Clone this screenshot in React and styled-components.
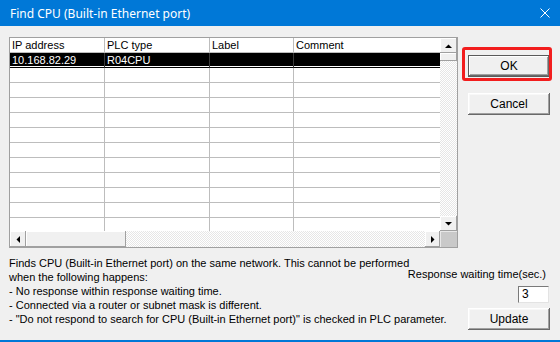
import React from 'react';
import styled, { createGlobalStyle } from 'styled-components';

const Global = createGlobalStyle`
  html, body { margin: 0; padding: 0; background: #f0f0f0; }
  body { font-family: "Liberation Sans", Arial, sans-serif; }
  * { box-sizing: border-box; }
`;

const Window = styled.div`
  position: relative;
  width: 560px;
  height: 342px;
  background: #f0f0f0;
  border-bottom: 2px solid #0078d7;
  display: flex;
  flex-direction: column;
  overflow: hidden;
  font-family: "Liberation Sans", Arial, sans-serif;
  font-size: 11px;
  color: #000;
`;

const TitleBar = styled.div`
  height: 26px;
  flex-shrink: 0;
  background: #0078d7;
  color: #fff;
  display: flex;
  align-items: center;
  justify-content: space-between;
  padding: 0 10px;
  font-family: "Noto Sans", sans-serif;
  font-size: 12px;
`;

const Body = styled.div`
  flex: 1;
  display: flex;
  flex-direction: column;
  padding: 11px 10px 0 9px;
`;

const TopRow = styled.div`
  display: flex;
`;

const Frame = styled.div`
  width: 450px;
  height: 211px;
  border: 1px solid #a0a0a0;
  background: #fff;
  display: grid;
  grid-template-columns: 1fr 17px;
  grid-template-rows: 1fr 16px;
`;

const Cells = styled.div`
  overflow: hidden;
  display: flex;
  flex-direction: column;
`;

const Row = styled.div`
  display: grid;
  grid-template-columns: 95px 105px 84px 1fr;
  height: 15px;
  flex-shrink: 0;
`;

const Cell = styled.div`
  height: 15px;
  line-height: 13px;
  padding: 1px 0 0 2px;
  white-space: nowrap;
  overflow: hidden;
  border-right: 1px solid ${p => (p.$sel ? '#3a3a3a' : '#bdbdbd')};
  border-bottom: 1px solid ${p => (p.$sel ? '#000' : '#bdbdbd')};
  color: ${p => (p.$sel ? '#fff' : '#000')};
  background: ${p => (p.$sel ? 'linear-gradient(to bottom, #000 0 13px, #fff 13px 14px)' : '#fff')};
  &:last-child { border-right: none; }
`;

const track = `
  background-color: #fff;
  background-image: repeating-conic-gradient(#e6e6e6 0 25%, #fff 0 50%);
  background-size: 2px 2px;
`;

const VScroll = styled.div`
  display: flex;
  flex-direction: column;
  ${track}
`;

const HScroll = styled.div`
  display: flex;
  ${track}
`;

const ScrollBtn = styled.div`
  flex-shrink: 0;
  width: ${p => p.$w}px;
  height: ${p => p.$h}px;
  background: #f0f0f0;
  box-shadow: inset -1px -1px #a0a0a0, inset 1px 1px #fff;
  display: flex;
  align-items: center;
  justify-content: center;
`;

const Thumb = styled.div`
  flex-shrink: 0;
  width: ${p => p.$w}px;
  height: ${p => p.$h}px;
  background: #f0f0f0;
  box-shadow: inset -1px -1px #a0a0a0, inset 1px 1px #fff;
`;

const Spacer = styled.div`
  flex: 1;
`;

const Corner = styled.div`
  background: #c9c9c9;
  box-shadow: inset 1px 1px #e8e8e8;
`;

const Arrow = ({ dir }) => {
  const pts = {
    up: '0,4 7,4 3.5,0.5',
    down: '0,0 7,0 3.5,3.5',
    left: '4,0 4,7 0.5,3.5',
    right: '0,0 0,7 3.5,3.5',
  }[dir];
  const v = dir === 'up' || dir === 'down';
  return (
    <svg width={v ? 7 : 4} height={v ? 4 : 7} viewBox={v ? '0 0 7 4' : '0 0 4 7'}>
      <polygon points={pts} fill="#000" />
    </svg>
  );
};

const ButtonCol = styled.div`
  margin-left: 10px;
  width: 82px;
  display: flex;
  flex-direction: column;
`;

const Button = styled.div`
  position: relative;
  width: 82px;
  height: 22px;
  margin-top: ${p => p.$mt || 0}px;
  background: #f0f0f0;
  display: flex;
  align-items: center;
  justify-content: center;
  font-size: 12px;
  color: #000;
  ${p =>
    p.$default
      ? `border: 1px solid #5a5a5a; box-shadow: inset -1px -1px #696969, inset 1px 1px #fff, inset -2px -2px #a0a0a0;`
      : `box-shadow: inset -1px -1px #696969, inset 1px 1px #fff, inset -2px -2px #a0a0a0, inset 2px 2px #f8f8f8;`}
`;

const Highlight = styled.div`
  position: absolute;
  left: -7px;
  right: -3px;
  top: -9px;
  bottom: -5px;
  border: 3px solid #f21d1d;
  border-radius: 3px;
  pointer-events: none;
`;

const BottomRow = styled.div`
  display: flex;
  margin-top: 8px;
`;

const Info = styled.div`
  flex: 1;
  line-height: 14px;
  font-size: 11px;
  white-space: nowrap;
`;

const SideCol = styled.div`
  width: 82px;
  margin-left: 10px;
  display: flex;
  flex-direction: column;
  align-items: flex-end;
`;

const SideLabel = styled.div`
  margin-top: 11px;
  margin-right: 4px;
  line-height: 14px;
  white-space: nowrap;
  font-size: 11px;
`;

const NumBox = styled.div`
  margin-top: 5px;
  margin-right: 1px;
  width: 31px;
  height: 17px;
  background: #fff;
  border: 1px solid #7a7a7a;
  border-right-color: #e3e3e3;
  border-bottom-color: #e3e3e3;
  padding-left: 3px;
  line-height: 15px;
  font-size: 12px;
`;

const rows = 12;

export default function App() {
  const header = ['IP address', 'PLC type', 'Label', 'Comment'];
  return (
    <>
      <Global />
      <Window>
        <TitleBar>
          <span>Find CPU (Built-in Ethernet port)</span>
          <svg width="10" height="10" viewBox="0 0 10 10">
            <path d="M0.5 0.5 L9.5 9.5 M9.5 0.5 L0.5 9.5" stroke="#fff" strokeWidth="1" />
          </svg>
        </TitleBar>
        <Body>
          <TopRow>
            <Frame>
              <Cells>
                <Row>
                  {header.map(h => (
                    <Cell key={h}>{h}</Cell>
                  ))}
                </Row>
                <Row>
                  {['10.168.82.29', 'R04CPU', '', ''].map((t, i) => (
                    <Cell key={i} $sel>
                      {t}
                    </Cell>
                  ))}
                </Row>
                {Array.from({ length: rows }).map((_, r) => (
                  <Row key={r}>
                    {[0, 1, 2, 3].map(c => (
                      <Cell key={c} />
                    ))}
                  </Row>
                ))}
              </Cells>
              <VScroll>
                <ScrollBtn $w={17} $h={15}>
                  <Arrow dir="up" />
                </ScrollBtn>
                <Thumb $w={17} $h={8} />
                <Spacer />
                <ScrollBtn $w={17} $h={15}>
                  <Arrow dir="down" />
                </ScrollBtn>
              </VScroll>
              <HScroll>
                <ScrollBtn $w={16} $h={16}>
                  <Arrow dir="left" />
                </ScrollBtn>
                <Thumb $w={100} $h={16} />
                <Spacer />
                <ScrollBtn $w={15} $h={16}>
                  <Arrow dir="right" />
                </ScrollBtn>
              </HScroll>
              <Corner />
            </Frame>
            <ButtonCol>
              <Button $default $mt={18}>
                OK
                <Highlight />
              </Button>
              <Button $mt={16}>Cancel</Button>
            </ButtonCol>
          </TopRow>
          <BottomRow>
            <Info>
              <div>Finds CPU (Built-in Ethernet port) on the same network. This cannot be performed</div>
              <div>when the following happens:</div>
              <div>- No response within response waiting time.</div>
              <div>- Connected via a router or subnet mask is different.</div>
              <div>- "Do not respond to search for CPU (Built-in Ethernet port)" is checked in PLC parameter.</div>
            </Info>
            <SideCol>
              <SideLabel>Response waiting time(sec.)</SideLabel>
              <NumBox>3</NumBox>
              <Button $mt={5}>Update</Button>
            </SideCol>
          </BottomRow>
        </Body>
      </Window>
    </>
  );
}
